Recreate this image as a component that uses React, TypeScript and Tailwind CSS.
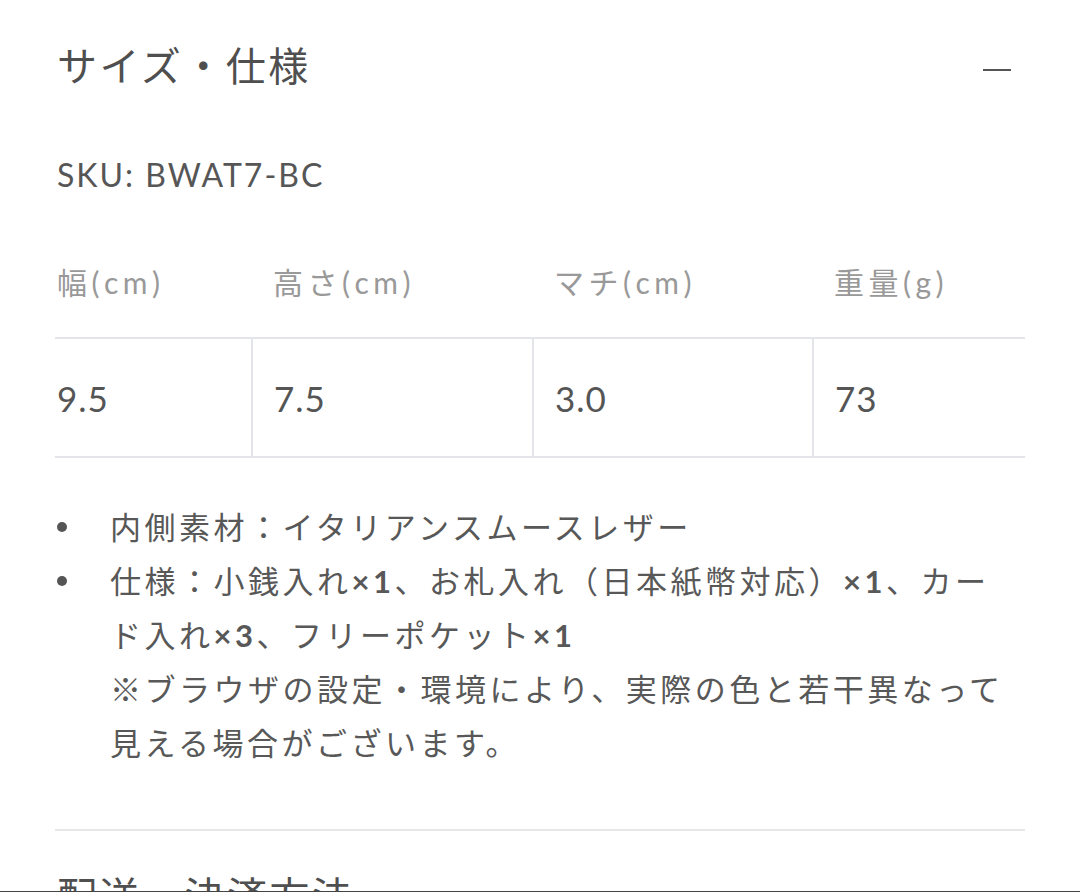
import React from "react";

const font = { fontFamily: 'Lato, "Noto Sans CJK JP", sans-serif' };

export default function App() {
  const headers = ["幅(cm)", "高さ(cm)", "マチ(cm)", "重量(g)"];
  const values = ["9.5", "7.5", "3.0", "73"];
  const widths = ["w-[196px]", "w-[281px]", "w-[280px]", "w-[213px]"];
  return (
    <div
      className="h-[892px] overflow-hidden bg-white border-b border-[#444] box-border"
      style={font}
    >
      <div className="ml-[55px] w-[970px]">
        {/* Title */}
        <div className="pt-[38px] flex items-center justify-between">
          <h2 className="text-[40px] leading-[57px] tracking-[2.5px] text-[#4f4f4f] pl-[2px]">
            サイズ・仕様
          </h2>
          <div className="w-[28px] h-[2px] bg-[#555] mr-[14px] mt-[6px]" />
        </div>

        {/* SKU */}
        <div className="mt-[56px] text-[32px] leading-[48px] tracking-[2px] text-[#565656] pl-[2px]">
          SKU: BWAT7-BC
        </div>

        {/* Table */}
        <div className="mt-[61px]">
          <div className="flex pb-[32px]">
            {headers.map((h, i) => (
              <div
                key={h}
                className={`${widths[i]} ${i === 0 ? "pl-[2px]" : "pl-[22px]"} text-[30px] leading-[45px] tracking-[4.5px] text-[#999]`}
              >
                {h}
              </div>
            ))}
          </div>
          <div className="flex border-t-2 border-b-2 border-[#e3e5eb]">
            {values.map((v, i) => (
              <div
                key={v}
                className={`${widths[i]} h-[117px] flex items-center pt-[1px] ${i === 0 ? "pl-[2px]" : "pl-[21px] border-l-2 border-[#e3e5eb]"} text-[35px] tracking-[1px] text-[#555]`}
              >
                {v}
              </div>
            ))}
          </div>
        </div>

        {/* List */}
        <ul className="mt-[42px] text-[31px] leading-[54px] tracking-[3.5px] text-[#585858]">
          <li className="flex">
            <span className="w-[55px] shrink-0 flex items-center h-[54px]">
              <span className="ml-[2px] w-[10px] h-[10px] rounded-full bg-[#555]" />
            </span>
            <span>内側素材：イタリアンスムースレザー</span>
          </li>
          <li className="flex">
            <span className="w-[55px] shrink-0 flex items-center h-[54px]">
              <span className="ml-[2px] w-[10px] h-[10px] rounded-full bg-[#555]" />
            </span>
            <span>
              仕様：小銭入れ<span className="font-bold">×1</span>、お札入れ（日本紙幣対応）<span className="font-bold">×1</span>、カー
              <br />
              ド入れ<span className="font-bold">×3</span>、フリーポケット<span className="font-bold">×1</span>
              <br />
              ※ブラウザの設定・環境により、実際の色と若干異なって
              <br />
              見える場合がございます。
            </span>
          </li>
        </ul>

        {/* Separator */}
        <div className="mt-[59px] h-[2px] bg-[#e6e6e6]" />

        {/* Next section heading */}
        <h2 className="mt-[37px] text-[40px] leading-[57px] tracking-[2.5px] text-[#4f4f4f] pl-[2px]">
          配送・決済方法
        </h2>
      </div>
    </div>
  );
}
